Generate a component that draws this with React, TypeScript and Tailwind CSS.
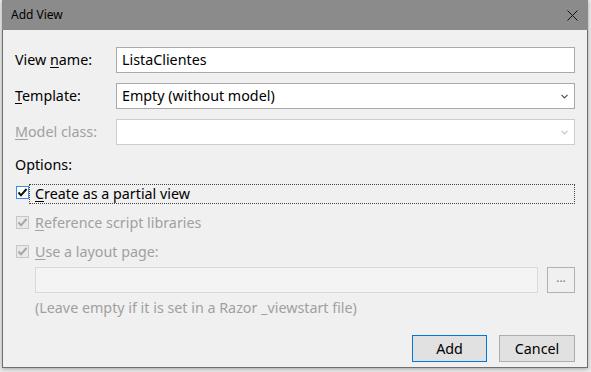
import type { ReactNode } from 'react';

function Chevron({ disabled }: { disabled?: boolean }) {
	return (
		<svg width="7" height="5" viewBox="0 0 7 5" className="shrink-0">
			<polyline
				points="0.5,0.8 3.5,3.8 6.5,0.8"
				fill="none"
				stroke={disabled ? '#c4c4c4' : '#505050'}
				strokeWidth="1.2"
			/>
		</svg>
	);
}

function CheckBox({ disabled }: { disabled?: boolean }) {
	return (
		<span
			className={
				disabled
					? 'flex h-[13px] w-[13px] shrink-0 items-center justify-center border border-[#c6c6c6] bg-[#e9e9e9]'
					: 'flex h-[13px] w-[13px] shrink-0 items-center justify-center border border-[#3b8be0] bg-white'
			}
		>
			<svg width="11" height="11" viewBox="0 0 11 11">
				<polyline
					points="1.5,5.5 4,8.3 9.5,2"
					fill="none"
					stroke={disabled ? '#a6a6a6' : '#111111'}
					strokeWidth="2"
				/>
			</svg>
		</span>
	);
}

// label with an underlined access key, like WinForms does
function Key({ k, rest }: { k: string; rest: string }) {
	return (
		<>
			<span className="underline underline-offset-2 decoration-1">{k}</span>
			{rest}
		</>
	);
}

function Row({ label, children, disabled }: { label: ReactNode; children: ReactNode; disabled?: boolean }) {
	return (
		<div className="flex h-[26px] items-center">
			<span className={`w-[101px] shrink-0 ${disabled ? 'text-[#a0a0a0]' : 'text-black'}`}>{label}</span>
			{children}
		</div>
	);
}

export default function App() {
	return (
		<div
			className="h-[372px] w-[591px] overflow-hidden bg-[#ebebeb] pl-[2px] text-[14.3px] leading-[20px] text-black"
			style={{ fontFamily: '"Noto Sans", "Open Sans", sans-serif' }}
		>
			<div className="flex h-[368px] w-[586px] flex-col shadow-[0_1px_4px_rgba(0,0,0,0.3)]">
				{/* title bar */}
				<div className="flex h-[30px] shrink-0 items-center justify-between bg-[#8b8b8b] pl-[9px] pr-[10px]">
					<span className="text-[12px] text-black">Add View</span>
					<svg width="11" height="11" viewBox="0 0 11 11">
						<path d="M0.5 0.5 L10.5 10.5 M10.5 0.5 L0.5 10.5" stroke="#111" strokeWidth="1" />
					</svg>
				</div>

				<div className="flex flex-1 flex-col border-x border-b border-[#6e6e6e] bg-[#f0f0f0] pl-[12px] pr-[12px] pt-[17px]">
					<Row label={<>View <Key k="n" rest="ame:" /></>}>
						<div className="flex h-full flex-1 items-center border border-[#a9a9a9] bg-white pl-[5px]">ListaClientes</div>
					</Row>

					<div className="mt-[10px]">
						<Row label={<Key k="T" rest="emplate:" />}>
							<div className="flex h-full flex-1 items-center justify-between border border-[#a9a9a9] bg-white pl-[5px] pr-[6px]">
								<span>Empty (without model)</span>
								<Chevron />
							</div>
						</Row>
					</div>

					<div className="mt-[10px]">
						<Row disabled label={<Key k="M" rest="odel class:" />}>
							<div className="flex h-full flex-1 items-center justify-end border border-[#cccccc] bg-white pr-[6px]">
								<Chevron disabled />
							</div>
						</Row>
					</div>

					<div className="mt-[10px] h-[20px]">Options:</div>

					<div className="mt-[9px] flex h-[20px] items-start pl-[1px]">
						<span className="mt-[2px]">
							<CheckBox />
						</span>
						<span className="flex h-[20px] flex-1 items-center border border-dotted border-[#444] pl-[5px]">
							<Key k="C" rest="reate as a partial view" />
						</span>
					</div>

					<div className="mt-[9px] flex h-[20px] items-start pl-[1px] text-[#a0a0a0]">
						<span className="mt-[3px]">
							<CheckBox disabled />
						</span>
						<span className="ml-[6px]">
							<Key k="R" rest="eference script libraries" />
						</span>
					</div>

					<div className="mt-[9px] flex h-[20px] items-start pl-[1px] text-[#a0a0a0]">
						<span className="mt-[3px]">
							<CheckBox disabled />
						</span>
						<span className="ml-[6px]">
							<Key k="U" rest="se a layout page:" />
						</span>
					</div>

					<div className="ml-[20px] mt-[5px] flex h-[26px] gap-[9px]">
						<div className="flex-1 border border-[#d9d9d9] bg-[#f4f4f4]" />
						<div className="flex w-[28px] items-center justify-center border border-[#b0b0b0] bg-[#f0f0f0] pb-[4px] text-[12px] text-[#7a7a7a]">
							...
						</div>
					</div>

					<div className="ml-[20px] mt-[5px] h-[20px] text-[#a0a0a0]">
						(Leave empty if it is set in a Razor _viewstart file)
					</div>

					<div className="mt-[17px] flex justify-end gap-[12px]">
						<button className="h-[27px] w-[75px] border border-[#0078d7] bg-[#e1e1e1] text-black">Add</button>
						<button className="h-[27px] w-[76px] border border-[#adadad] bg-[#e1e1e1] text-black">Cancel</button>
					</div>
				</div>
			</div>
		</div>
	);
}
